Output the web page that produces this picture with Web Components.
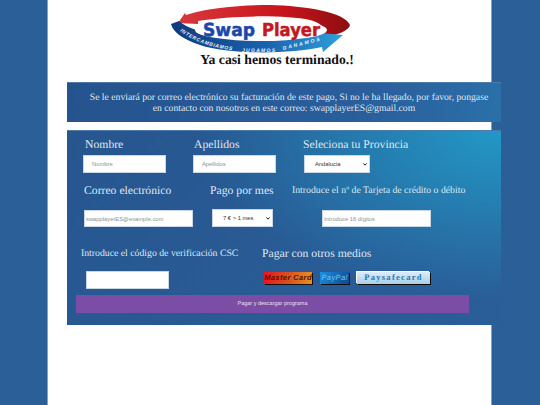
<!DOCTYPE html>
<html lang="es">
<head>
<meta charset="utf-8">
<title>Swap Player</title>
<style>
html, body { margin: 0; height: 100%; }
body { background: #2a5f98; overflow: hidden; font-family: "Liberation Serif", serif; text-rendering: geometricPrecision; }
</style>
</head>
<body>
<swap-page>
  <swap-logo></swap-logo>
  <h1 slot="title">Ya casi hemos terminado.!</h1>
  <swap-notice slot="panels">Se le enviará por correo electrónico su facturación de este pago, Si no le ha llegado, por favor, pongase en contacto con nosotros en este correo: swapplayerES@gmail.com</swap-notice>
  <swap-form slot="panels"></swap-form>
</swap-page>

<script>
class SwapPage extends HTMLElement {
    constructor() {
        super();
        this.attachShadow({ mode: "open" }).innerHTML = `
        <style>
        :host { display: block; width: 443px; height: 405px; margin-left: 48px; background: #fff; box-shadow: 0 0 0 1px #7fa3c8; }
        .head { height: 50px; padding-left: 122px; }
        .title { height: 29px; padding: 3px 0 0 15px; text-align: center; }
        ::slotted(h1) { margin: 0; font: bold 13.7px/14px "Liberation Serif", serif; color: #111; }
        .stack { display: flex; flex-direction: column; gap: 8px; margin-left: 19px; width: 434px; }
        </style>
        <div class="head"><slot></slot></div>
        <div class="title"><slot name="title"></slot></div>
        <div class="stack"><slot name="panels"></slot></div>
        `;
    }
}

class SwapLogo extends HTMLElement {
    constructor() {
        super();
        this.attachShadow({ mode: "open" }).innerHTML = `
        <style>
        :host { display: block; width: 184px; height: 50px; }
        svg { display: block; overflow: visible; }
        .name { font-family: "DejaVu Sans", sans-serif; font-weight: bold; stroke-width: .5; }
        .small { font-family: "Liberation Sans", sans-serif; font-size: 5px; font-style: italic; font-weight: bold; fill: #e6f2fc; }
        </style>
        <svg width="184" height="56" viewBox="0 0 184 56">
          <defs>
            <linearGradient id="red" x1="0" x2="1" y1="0" y2="0">
              <stop offset="0" stop-color="#d9383c"/><stop offset=".6" stop-color="#c8161c"/><stop offset="1" stop-color="#8e0d10"/>
            </linearGradient>
            <linearGradient id="blue" x1="0" x2="1" y1="0" y2="0">
              <stop offset="0" stop-color="#103a7c"/><stop offset=".55" stop-color="#1a62ac"/><stop offset="1" stop-color="#2fa0dc"/>
            </linearGradient>
            <path id="curve" d="M10 31 C24 42 46 49 68 51"/>
          </defs>
          <path d="M8 23 L15 13 L16 15 C40 7 75 5 100 5 C135 6 175 12 180 25 C179 31 165 36 150 38 C158 32 155 24 140 20 C115 15 65 15 28 21 L28 24 Z" fill="url(#red)"/>
          <path d="M1 24 L9 21 C18 30 50 38 85 39 C110 40 135 38 148 36 L150 33 L173 35 L153 52 L152 47 C120 54 60 55 30 45 C12 39 3 32 1 24 Z" fill="url(#blue)"/>
          <ellipse cx="91" cy="30" rx="66" ry="11" fill="#fff"/>
          <text class="name" x="33" y="36" font-size="18" fill="#1b47ad" stroke="#1b47ad" textLength="52" lengthAdjust="spacingAndGlyphs">Swap</text>
          <text class="name" x="92" y="36" font-size="18" fill="#c3181f" stroke="#c3181f" textLength="58" lengthAdjust="spacingAndGlyphs">Player</text>
          <text class="small" textLength="56"><textPath href="#curve">INTERCAMBIAMOS</textPath></text>
          <text class="small" x="72" y="51.5" textLength="33">JUGAMOS</text>
          <text class="small" transform="translate(113 50) rotate(-14)" textLength="38">GANAMOS</text>
        </svg>
        `;
    }
}

class SwapNotice extends HTMLElement {
    constructor() {
        super();
        this.attachShadow({ mode: "open" }).innerHTML = `
        <style>
        :host {
            display: block; box-sizing: border-box; height: 40px; padding: 9px 10px 0 10px;
            background: linear-gradient(100deg, #25538d 0%, #2a5f9c 70%, #2a70a9 100%);
            border-top: 1px solid #4d7bab;
            color: #dfe8f2; font: 9.68px/11px "Liberation Serif", serif; text-align: center; text-indent: 10px;
        }
        </style>
        <slot></slot>
        `;
    }
}

class SwapField extends HTMLElement {
    constructor() {
        super();
        this.attachShadow({ mode: "open" }).innerHTML = `
        <style>
        :host { display: block; color: #dfe8f2; }
        .label { font-size: var(--label-size, 11.7px); line-height: 16px; white-space: nowrap; margin-left: var(--label-x, 0); }
        .box { margin-left: var(--box-x, 0); margin-top: var(--box-gap, 2px); }
        ::slotted(input), ::slotted(select) {
            display: block; box-sizing: border-box; border: 1px solid #c9d6e4; background-color: #fff;
            font: 5.8px "Liberation Sans", sans-serif; color: #333; border-radius: 0; outline: 0;
        }
        ::slotted(select) {
            appearance: none;
            background-image: url("data:image/svg+xml,%3Csvg xmlns='http://www.w3.org/2000/svg' width='4' height='3'%3E%3Cpath d='M.4.4L2 2.2 3.6.4' fill='none' stroke='%23222' stroke-width='1'/%3E%3C/svg%3E");
            background-repeat: no-repeat;
            background-position: right 2px center;
        }
        </style>
        <div class="label"><slot name="label"></slot></div>
        <div class="box"><slot></slot></div>
        `;
    }
}

class SwapForm extends HTMLElement {
    constructor() {
        super();
        this.attachShadow({ mode: "open" }).innerHTML = `
        <style>
        :host {
            display: block; box-sizing: border-box; height: 195px; position: relative;
            background: radial-gradient(ellipse 300px 170px at 100% 0, #2298c6 0%, rgba(42,95,152,0) 100%), linear-gradient(135deg, #27568f, #2a5e98);
            border-top: 1px solid #4d7bab;
            color: #dfe8f2; font-family: "Liberation Serif", serif;
        }
        .grid { display: flex; flex-direction: column; }
        .row { display: flex; }
        .r1 { padding: 6px 0 0 16px; height: 46px; }
        .r2 { padding-left: 17px; height: 63px; }
        .r3 { padding-left: 14px; height: 46px; }
        input::placeholder { color: #8a8f96; }
        .pay { display: flex; flex-direction: column; }
        .btns { display: flex; gap: 8px; margin: 8px 0 0 2px; }
        .btn {
            display: block; height: 12px; box-sizing: border-box; font: italic bold 7.5px/12px "Liberation Sans", sans-serif;
            text-align: center; box-shadow: 1px 1px 0 #111; letter-spacing: .4px;
        }
        .mc { width: 48px; background: linear-gradient(90deg, #ee1420 0%, #d8501c 50%, #e98f21 100%); color: #5a1208; }
        .pp { width: 29px; background: linear-gradient(120deg, #1d8fe0, #0f4f96 90%); color: #6fc2f4; font-weight: normal; }
        .ps { width: 73px; background: linear-gradient(180deg, #dcecf7, #a9cfe8); color: #2a78b4; font: bold 8.5px/11px "Liberation Serif", serif; letter-spacing: 1.3px; box-shadow: 1px 1px 0 #0a0a0a, -1px -1px 0 #fff; }
        .submit {
            position: absolute; left: 9px; top: 164px; width: 393px; height: 18px;
            background: #7c4da4; color: #e9e0f2; font: 5.5px/18px "Liberation Sans", sans-serif; text-align: center;
        }
        </style>
        <div class="grid">
          <div class="row r1">
            <swap-field style="width:110px;--label-x:2px">
              <span slot="label">Nombre</span>
              <input style="width:83px;height:18px;padding-left:8px" placeholder="Nombre">
            </swap-field>
            <swap-field style="width:110px;--label-x:1px">
              <span slot="label">Apellidos</span>
              <input style="width:83px;height:18px;padding-left:8px" placeholder="Apellidos">
            </swap-field>
            <swap-field style="--box-x:1px">
              <span slot="label">Seleciona tu Provincia</span>
              <select style="width:66px;height:18px;padding-left:10px"><option>Andalucia</option></select>
            </swap-field>
          </div>
          <div class="row r2">
            <swap-field style="width:126px;--box-gap:11px">
              <span slot="label">Correo electrónico</span>
              <input style="width:109px;height:17px;padding-left:1px" placeholder="swapplayerES@example.com">
            </swap-field>
            <swap-field style="width:82px;--box-x:2px;--box-gap:10px">
              <span slot="label">Pago por mes</span>
              <select style="width:61px;height:18px;padding-left:10px"><option>7 € &gt; 1 mes</option></select>
            </swap-field>
            <swap-field style="--label-size:9.75px;--box-x:30px;--box-gap:11px">
              <span slot="label">Introduce el nº de Tarjeta de crédito o débito</span>
              <input style="width:109px;height:17px;padding-left:1px" placeholder="Introduce 16 dígitos">
            </swap-field>
          </div>
          <div class="row r3">
            <swap-field style="width:181px;--label-size:9.75px;--box-x:5px;--box-gap:9px">
              <span slot="label">Introduce el código de verificación CSC</span>
              <input style="width:83px;height:18px">
            </swap-field>
            <div class="pay">
              <swap-field>
                <span slot="label">Pagar con otros medios</span>
              </swap-field>
              <div class="btns">
                <span class="btn mc">Master Card</span>
                <span class="btn pp">PayPal</span>
                <span class="btn ps">Paysafecard</span>
              </div>
            </div>
          </div>
        </div>
        <div class="submit">Pagar y descargar programa</div>
        `;
    }
}

customElements.define("swap-page", SwapPage);
customElements.define("swap-logo", SwapLogo);
customElements.define("swap-notice", SwapNotice);
customElements.define("swap-field", SwapField);
customElements.define("swap-form", SwapForm);
</script>
</body>
</html>
